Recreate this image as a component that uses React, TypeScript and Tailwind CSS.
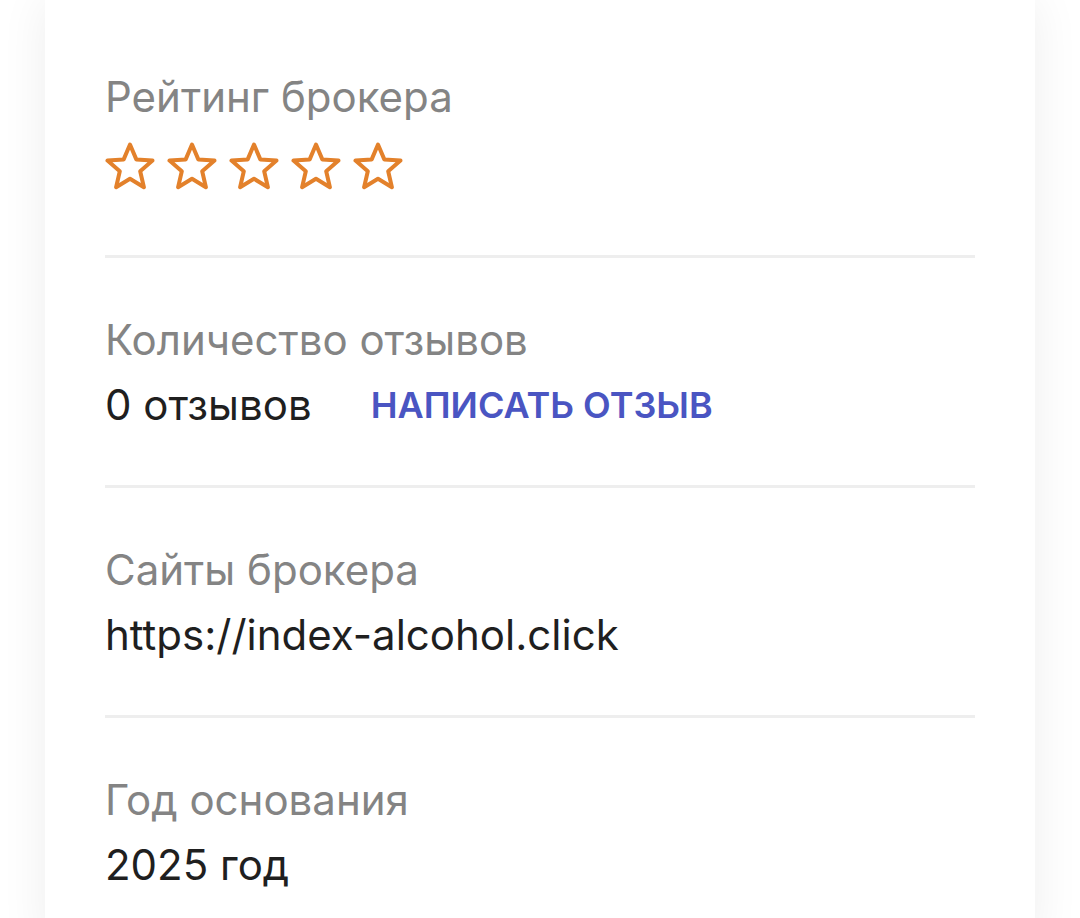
import type { ReactNode } from 'react';

function StarOutline() {
  return (
    <svg viewBox="0 0 50 48" className="h-[50px] w-[50px]" fill="none">
      <polygon
        points="25,2.5 31.3,17.4 47.5,18.6 35.2,29.2 38.9,45.2 25,36.8 11.1,45.2 14.8,29.2 2.5,18.6 18.7,17.4"
        stroke="#e3812b"
        strokeWidth="4"
        strokeLinejoin="round"
      />
    </svg>
  );
}

function Section({ label, children, last }: { label: string; children: ReactNode; last?: boolean }) {
  return (
    <div className={last ? 'pt-[50px] pb-[48px]' : 'border-b-[3px] border-[#eeeeee] pt-[50px] pb-[48px]'}>
      <div className="text-[42px] leading-[64px] text-[#848484]">{label}</div>
      <div className="mt-px">{children}</div>
    </div>
  );
}

export default function App() {
  return (
    <div className="min-h-[918px] bg-white px-[45px]" style={{ fontFamily: 'Inter, "Noto Sans", sans-serif' }}>
      <div className="min-h-[918px] bg-white px-[60px] pt-[15px] shadow-[0_0_45px_rgba(0,0,0,0.07)]">
        <div className="border-b-[3px] border-[#eeeeee] pt-[50px] pb-[64px]">
          <div className="text-[42px] leading-[64px] text-[#848484]">Рейтинг брокера</div>
          <div className="mt-[12px] flex gap-[12px]">
            <StarOutline />
            <StarOutline />
            <StarOutline />
            <StarOutline />
            <StarOutline />
          </div>
        </div>

        <Section label="Количество отзывов">
          <div className="flex items-center gap-[59px] leading-[64px]">
            <span className="text-[42px] text-[#1f1f1f]">0 отзывов</span>
            <a href="#" className="text-[36px] font-semibold text-[#4a55c2]">
              НАПИСАТЬ ОТЗЫВ
            </a>
          </div>
        </Section>

        <Section label="Сайты брокера">
          <div className="text-[42px] leading-[64px] text-[#1f1f1f]">https://index-alcohol.click</div>
        </Section>

        <Section label="Год основания" last>
          <div className="text-[42px] leading-[64px] text-[#1f1f1f]">2025 год</div>
        </Section>
      </div>
    </div>
  );
}
